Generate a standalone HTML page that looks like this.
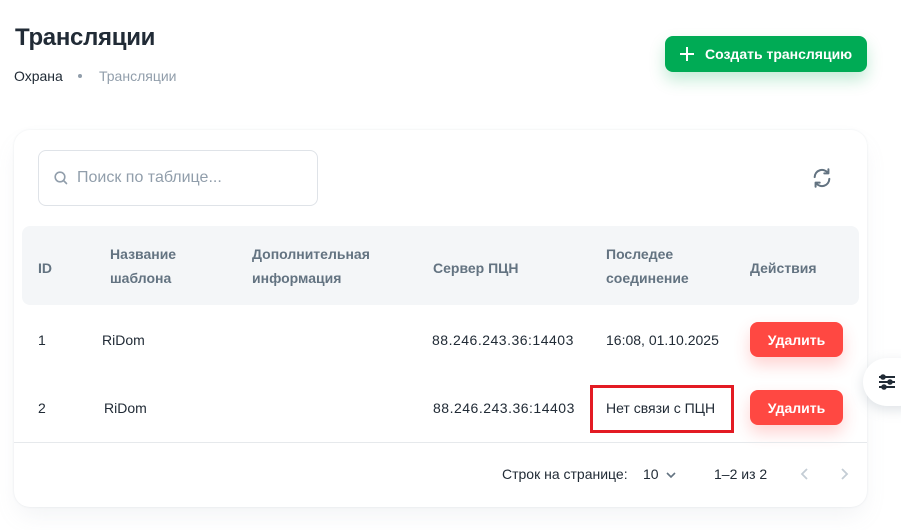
<!DOCTYPE html>
<html><head><meta charset="utf-8"><style>
*{box-sizing:border-box;margin:0;padding:0}
body{width:901px;height:530px;background:#fff;font-family:"Liberation Sans","Noto Sans CJK SC",sans-serif;color:#212b36;position:relative;overflow:hidden}
.abs{position:absolute}
h1{position:absolute;left:15px;top:24px;font-size:24px;font-weight:700;color:#212b36;letter-spacing:-0.3px}
.bc{position:absolute;top:68px;font-size:14px}
.btn{position:absolute;left:665px;top:36px;width:202px;height:36px;background:#00ab55;border-radius:8px;color:#fff;font-weight:700;font-size:14px;box-shadow:0 8px 16px rgba(0,171,85,.24);display:flex;align-items:center;padding-left:14px}
.card{position:absolute;left:14px;top:130px;width:853px;height:377px;background:#fff;border-radius:16px;box-shadow:0 0 2px rgba(145,158,171,.2),0 12px 24px -4px rgba(145,158,171,.12)}
.search{position:absolute;left:38px;top:150px;width:280px;height:56px;border:1px solid #dfe3e8;border-radius:8px;display:flex;align-items:center;padding-left:14px;color:#919eab;font-size:16px}
.thead{position:absolute;left:22px;top:226px;width:837px;height:79px;background:#f4f6f8;border-radius:8px}
.th{position:absolute;font-size:14px;font-weight:700;color:#637381;line-height:24px}
.td{position:absolute;font-size:14px;color:#212b36}
.srv{letter-spacing:0.5px}
.del{position:absolute;left:750px;width:93px;height:35px;background:#ff4842;border-radius:8px;color:#fff;font-weight:700;font-size:14px;display:flex;align-items:center;justify-content:center;box-shadow:0 8px 16px rgba(255,72,66,.24)}
</style></head><body>
<h1>Трансляции</h1>
<div class="bc" style="left:14px;color:#212b36">Охрана</div>
<div class="abs" style="left:78px;top:74px;width:4px;height:4px;border-radius:50%;background:#919eab"></div>
<div class="bc" style="left:99px;color:#919eab">Трансляции</div>
<div class="btn"><svg width="16" height="16" viewBox="0 0 16 16" style="margin-right:10px"><path d="M8 1v14M1 8h14" stroke="#fff" stroke-width="2"/></svg>Создать трансляцию</div>
<div class="card"></div>
<div class="search"><svg width="16" height="16" viewBox="0 0 16 16" style="margin-right:8px"><circle cx="7" cy="7" r="4.8" fill="none" stroke="#919eab" stroke-width="1.6"/><path d="M10.5 10.5l3 3" stroke="#919eab" stroke-width="1.6" stroke-linecap="round"/></svg>Поиск по таблице...</div>
<svg class="abs" style="left:811px;top:167px" width="22" height="22" viewBox="0 0 24 24" fill="none" stroke="#637381" stroke-width="2.2" stroke-linecap="round" stroke-linejoin="round"><path d="M4 11a8 8 0 0 1 14.5-4.5M20 13a8 8 0 0 1-14.5 4.5"/><path d="M19 2.5v4.5h-4.5M5 21.5V17h4.5"/></svg>
<div class="thead"></div>
<div class="th" style="left:38px;top:256px">ID</div>
<div class="th" style="left:110px;top:242px">Название<br>шаблона</div>
<div class="th" style="left:252px;top:242px">Дополнительная<br>информация</div>
<div class="th" style="left:433px;top:256px">Сервер ПЦН</div>
<div class="th" style="left:606px;top:242px">Последее<br>соединение</div>
<div class="th" style="left:750px;top:256px">Действия</div>
<div class="td" style="left:38px;top:332px">1</div>
<div class="td" style="left:102px;top:332px">RiDom</div>
<div class="td srv" style="left:432px;top:332px">88.246.243.36:14403</div>
<div class="td" style="left:606px;top:332px">16:08, 01.10.2025</div>
<div class="del" style="top:322px">Удалить</div>
<div class="td" style="left:38px;top:400px">2</div>
<div class="td" style="left:104px;top:400px">RiDom</div>
<div class="td srv" style="left:433px;top:400px">88.246.243.36:14403</div>
<div class="abs" style="left:590px;top:385px;width:144px;height:48px;border:3px solid #e31b23"></div>
<div class="td" style="left:606px;top:400px">Нет связи с ПЦН</div>
<div class="del" style="top:390px">Удалить</div>
<div class="abs" style="left:14px;top:442px;width:853px;height:1px;background:#e6e9ec"></div>
<div class="td" style="left:502px;top:466px">Строк на странице:</div>
<div class="td" style="left:643px;top:466px">10</div>
<svg class="abs" style="left:665px;top:470px" width="12" height="10" viewBox="0 0 12 10"><path d="M2 3l4 4 4-4" fill="none" stroke="#637381" stroke-width="1.6"/></svg>
<div class="td" style="left:714px;top:466px">1–2 из 2</div>
<svg class="abs" style="left:799px;top:467px" width="12" height="14" viewBox="0 0 12 14"><path d="M8 2L3 7l5 5" fill="none" stroke="#c4cdd5" stroke-width="1.8"/></svg>
<svg class="abs" style="left:838px;top:467px" width="12" height="14" viewBox="0 0 12 14"><path d="M4 2l5 5-5 5" fill="none" stroke="#c4cdd5" stroke-width="1.8"/></svg>
<div class="abs" style="left:863px;top:358px;width:60px;height:48px;border-radius:24px;background:#fff;box-shadow:0 4px 12px rgba(145,158,171,.3)"></div>
<svg class="abs" style="left:878px;top:374px" width="18" height="16" viewBox="0 0 18 16" stroke="#212b36" stroke-width="2" fill="#212b36"><path d="M1 3h16M1 8h16M1 13h16"/><circle cx="5" cy="3" r="1.8"/><circle cx="12" cy="8" r="1.8"/><circle cx="6" cy="13" r="1.8"/></svg>
</body></html>
